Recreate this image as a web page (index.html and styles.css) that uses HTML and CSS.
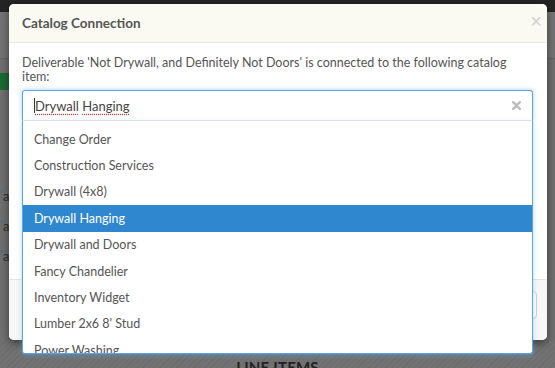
FILE: index.html
```html
<!DOCTYPE html>
<html lang="en">
<head>
    <meta charset="UTF-8">
    <title>Catalog Connection</title>
    <link rel="stylesheet" href="styles.css">
</head>
<body>

<div class="page">
    <div class="topbar"></div>
    <div class="subbar"></div>
    <div class="greenbar"></div>
    <div class="rows">
        <div class="row"><span class="tick"></span>a</div>
        <div class="row"><span class="tick"></span>a</div>
        <div class="row"><span class="tick"></span>a</div>
    </div>
    <div class="line-items">
        <h3>LINE ITEMS</h3>
    </div>
</div>

<div class="modal">
    <div class="modal-header">
        <h4>Catalog Connection</h4>
        <span class="close">&times;</span>
    </div>
    <div class="modal-body">
        <p>Deliverable 'Not Drywall, and Definitely Not Doors' is connected to the following catalog item:</p>
        <div class="select">
            <div class="select-input">
                <span class="caret"></span>
                <span class="typed"><u>Drywall</u> <u>Hanging</u></span>
                <svg class="clear" width="9" height="9" viewBox="0 0 9 9">
                    <path d="M1.2 1.2 L7.8 7.8 M7.8 1.2 L1.2 7.8" stroke="#bdbdbd" stroke-width="2.4" stroke-linecap="round"/>
                </svg>
            </div>
            <ul class="select-list">
                <li>Change Order</li>
                <li>Construction Services</li>
                <li>Drywall (4x8)</li>
                <li class="active">Drywall Hanging</li>
                <li>Drywall and Doors</li>
                <li>Fancy Chandelier</li>
                <li>Inventory Widget</li>
                <li>Lumber 2x6 8' Stud</li>
                <li>Power Washing</li>
                <li>Roofing</li>
            </ul>
        </div>
    </div>
    <div class="modal-footer">
        <button class="btn">Close</button>
    </div>
</div>

</body>
</html>
```

FILE: styles.css
```css
/* page behind the dialog, already dimmed */
body {
    margin: 0;
    width: 555px;
    height: 368px;
    overflow: hidden;
    background-color: #6f6f6f;
    font-family: 'Lato', 'Liberation Sans', sans-serif;
    position: relative;
}
.page {
    height: 368px;
    display: flex;
    flex-direction: column;
}
.topbar {
    height: 12px;
    background-color: #242424;
}
.subbar {
    height: 46px;
    background-color: #747474;
    border-bottom: 1px solid #666;
}
.greenbar {
    width: 120px;
    height: 17px;
    margin-top: 14px;
    background-color: #1c6a35;
}
.rows {
    flex: 1;
    padding-top: 98px;
}
.row {
    height: 30px;
    font-size: 13px;
    color: #2e2e2e;
    padding-left: 1px;
}
.tick {
    display: inline-block;
    width: 1px;
    height: 3px;
    margin-right: 1px;
    background-color: #3d6c93;
    vertical-align: top;
    margin-top: 2px;
}
.line-items {
    height: 28px;
    background-color: #727272;
    background-image: repeating-linear-gradient(135deg, rgba(0, 0, 0, 0.06) 0 1px, transparent 1px 4px);
    overflow: hidden;
}
.line-items h3 {
    margin: 18px 0 0;
    text-align: center;
    font-size: 15px;
    font-weight: 700;
    color: #222;
    letter-spacing: 0.2px;
}

/* dialog */
.modal {
    position: absolute;
    left: 9px;
    top: 4px;
    width: 538px;
    height: 336px;
    background: #fff;
    border-radius: 5px;
    box-shadow: 0 3px 9px rgba(0, 0, 0, 0.5);
    display: flex;
    flex-direction: column;
    color: #555;
}
.modal-header {
    height: 38px;
    padding: 0 13px;
    background-color: #fbfaf2;
    border-bottom: 1px solid #e8e8e0;
    border-radius: 5px 5px 0 0;
    display: flex;
    align-items: center;
    justify-content: space-between;
}
.modal-header h4 {
    margin: 0;
    font-size: 13.5px;
    font-weight: 700;
    color: #555;
}
.close {
    font-family: 'Liberation Sans', sans-serif;
    font-size: 20px;
    color: #cfcfcf;
    margin-right: -8px;
    margin-top: -4px;
}
.modal-body {
    flex: 1;
    padding: 13px 13px 0;
}
.modal-body p {
    margin: 0 0 6px;
    font-size: 12.5px;
    line-height: 14px;
}
.select {
    position: relative;
    width: 511px;
    box-shadow: 0 0 5px rgba(82, 168, 236, 0.55);
    border-radius: 3px;
}
.select-input {
    height: 29px;
    border: 1px solid #5da5e0;
    border-bottom: 1px solid #e6e6e6;
    border-radius: 3px 3px 0 0;
    display: flex;
    align-items: center;
    padding: 0 11px;
    font-size: 13px;
    color: #444;
}
.caret {
    width: 1px;
    height: 15px;
    background-color: #333;
}
.typed u {
    text-decoration: underline dotted #e03030;
    text-underline-offset: 3px;
}
.clear {
    margin-left: auto;
}
.select-list {
    position: absolute;
    left: 0;
    right: 0;
    top: 100%;
    height: 227px;
    margin: 0;
    padding: 5px 0 0;
    list-style: none;
    background: #fff;
    border: 1px solid #5da5e0;
    border-top: none;
    border-radius: 0 0 3px 3px;
    overflow: hidden;
    box-shadow: 0 2px 5px rgba(82, 168, 236, 0.45);
}
.select-list li {
    height: 15px;
    padding: 5.7px 11px;
    font-size: 12.5px;
    line-height: 15px;
    color: #555;
}
.select-list li.active {
    background-color: #2f87d0;
    color: #fff;
}
.modal-footer {
    height: 49px;
    border-top: 1px solid #e5e5e5;
    background-color: #f7f7f7;
    border-radius: 0 0 5px 5px;
    display: flex;
    justify-content: flex-end;
    align-items: flex-start;
    padding: 11px 10px 0;
}
.btn {
    height: 28px;
    padding: 0 14px;
    border: 1px solid #d0d0d0;
    border-radius: 4px;
    background: #fff;
    font-family: inherit;
    font-size: 13px;
    color: #555;
}
```
